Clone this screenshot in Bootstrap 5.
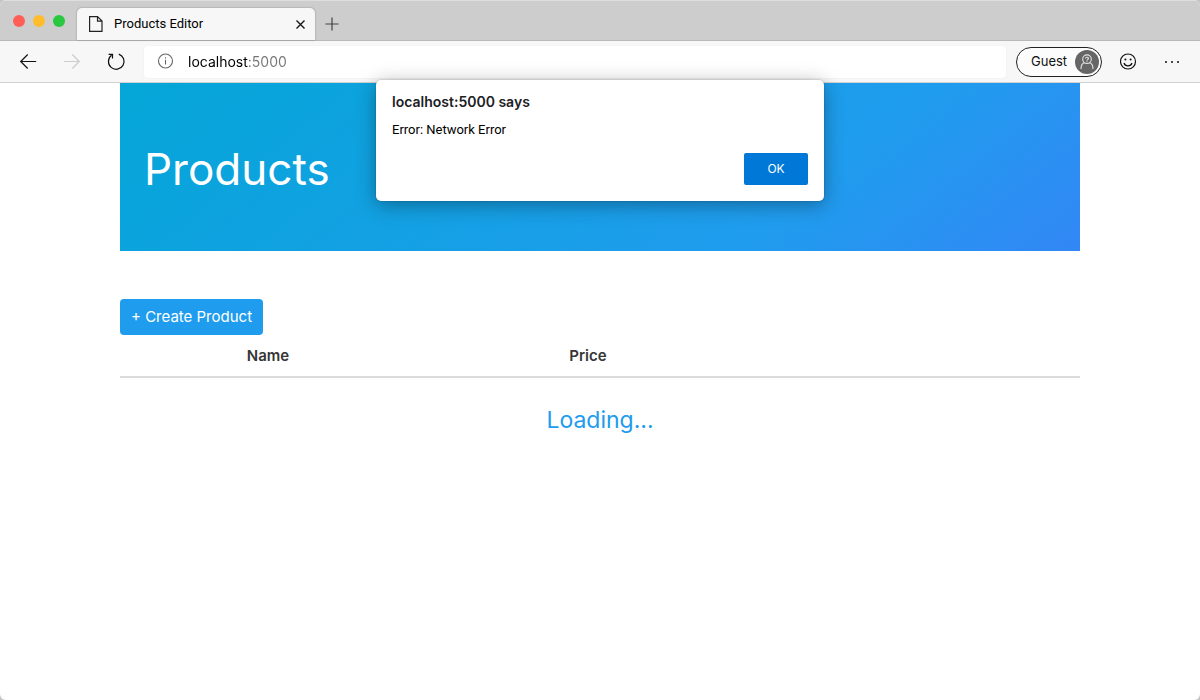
<!DOCTYPE html>
<html lang="en">
<head>
<meta charset="utf-8">
<meta name="viewport" content="width=device-width, initial-scale=1">
<title>Products Editor</title>
<link href="https://cdn.jsdelivr.net/npm/bootstrap@5.3.0/dist/css/bootstrap.min.css" rel="stylesheet">
<style>
  body { font-family: Inter, "Liberation Sans", sans-serif; background: #c4c4c4; color: #363636; }
  .app-window { background: #fff; border-radius: 6px; overflow: hidden; }
  .tab-strip { height: 40px; padding-left: 13px; background: #cdcdcd; border-top: 1px solid #dedede; }
  .lights { gap: 8px; width: 64px; }
  .light { width: 12px; height: 12px; border-radius: 50%; }
  .light-close { background: #ff5f57; }
  .light-min { background: #ffbd2e; }
  .light-max { background: #28c940; }
  .page-tab { width: 238px; height: 32px; padding: 0 8px 0 11px; gap: 10px; background: #f7f7f7; border-radius: 5px 5px 0 0; box-shadow: 0 0 2px rgba(0,0,0,.35); }
  .small-ui { font-family: Roboto, "Liberation Sans", sans-serif; font-size: 13px; color: #000; }
  .tool { border: 0; background: none; padding: 0; line-height: 0; color: #111; }
  .tool:disabled { color: #ccc; }
  .new-tab { margin: 7px 0 0 10px; }
  .toolbar { height: 43px; padding: 0 18px; background: #f7f7f7; border-top: 1px solid #b9b9b9; border-bottom: 1px solid #d2d2d2; }
  .address { height: 32px; background: #fff; border-radius: 4px; padding-left: 13px; gap: 14px; margin: 0 10px 0 18px; box-shadow: 0 0 2px rgba(0,0,0,.06); }
  .address input { border: 0; outline: 0; padding: 0; font-size: 14px; color: transparent; background: linear-gradient(90deg, #000 60px, #757575 60px); -webkit-background-clip: text; background-clip: text; }
  .guest { width: 86px; height: 30px; margin-right: 18px; border: 1px solid #222; border-radius: 15px; background: #fcfcfc; padding: 0 2px 0 14px; font-size: 13px; color: #111; }
  .dialog-box { position: absolute; top: 80px; left: 50%; margin-left: -224px; width: 448px; height: 121px; padding: 12px 16px 16px; border-radius: 5px; background: #fff; z-index: 5; box-shadow: 0 4px 20px rgba(0,0,0,.34), 0 0 2px rgba(0,0,0,.25); }
  .dialog-box h2 { font-size: 14px; line-height: 20px; font-weight: 600; color: #202124; margin-bottom: 8px; }
  .dialog-box p { line-height: 20px; margin: 0; }
  .btn-ok, .btn-ok:hover { width: 64px; height: 32px; padding: 0; border: 0; border-radius: 2px; background: #0078d7; color: #fff; font-size: 12px; }
  .page-body { width: 80%; }
  .hero { height: 168px; padding: 4px 24px 0; background: linear-gradient(141deg, #04a6d7 0%, #209cee 71%, #3287f5 100%); color: #fff; }
  .hero h1 { font-size: 44px; font-weight: 400; margin: 0; }
  .btn-create, .btn-create:hover { height: 36px; padding: 1px 11px 0; border: 0; border-radius: 4px; background: #209cee; color: #fff; font-size: 15px; }
  .products { table-layout: fixed; width: 100%; font-size: 15px; }
  .products th { height: 42px; padding-top: 1px; line-height: 20px; text-align: center; font-weight: 600; border-bottom: 2px solid #dbdbdb; }
  .col-name { width: 296px; }
  .col-price { width: 344px; }
  .loading { color: #209cee; font-size: 23px; line-height: 36px; padding-top: 24px; }
</style>
</head>
<body>
<div class="app-window min-vh-100">
  <header>
    <div class="tab-strip d-flex align-items-center">
      <div class="lights d-flex" aria-hidden="true">
        <span class="light light-close"></span><span class="light light-min"></span><span class="light light-max"></span>
      </div>
      <div class="page-tab d-flex align-items-center align-self-end">
        <svg width="16" height="18" viewBox="0 0 16 18" fill="none" stroke="#222" stroke-width="1.2"><path d="M1.6 1.6H9.5L14 6.1V16.4H1.6ZM9.5 1.6V6.1H14"/></svg>
        <span class="small-ui me-auto">Products Editor</span>
        <button class="tool" type="button" aria-label="Close tab"><svg width="13" height="13" viewBox="0 0 13 13" fill="none" stroke="currentColor" stroke-width="1.3"><path d="M2.5 2.5L10.5 10.5M10.5 2.5L2.5 10.5"/></svg></button>
      </div>
      <button class="tool new-tab" type="button" aria-label="New tab"><svg width="14" height="14" viewBox="0 0 14 14" fill="none" stroke="#444" stroke-width="1.2"><path d="M7 .5V13.5M.5 7H13.5"/></svg></button>
    </div>
    <div class="toolbar d-flex align-items-center">
      <button class="tool" type="button" aria-label="Back"><svg width="20" height="20" viewBox="0 0 20 20" fill="none" stroke="currentColor" stroke-width="1.2"><path d="M18.2 9.5H2.8M9.7 2.5L2.7 9.5L9.7 16.5"/></svg></button>
      <button class="tool ms-4" type="button" aria-label="Forward" disabled><svg width="20" height="20" viewBox="0 0 20 20" fill="none" stroke="currentColor" stroke-width="1.2"><path d="M2 9.5H17.3M10.3 2.5L17.3 9.5L10.3 16.5"/></svg></button>
      <button class="tool ms-4" type="button" aria-label="Reload"><svg width="20" height="20" viewBox="0 0 20 20" fill="none" stroke="currentColor" stroke-width="1.2"><path d="M12.8 2.1A7.8 7.8 0 1 1 5.5 3.3M2.6 2.3H6.5V6.4"/></svg></button>
      <div class="address d-flex align-items-center flex-grow-1">
        <svg width="17" height="17" viewBox="0 0 17 17" fill="none" stroke="#666" stroke-width="1.1"><circle cx="8.5" cy="8" r="7"/><path d="M8.5 6.8V11.5M8.5 4.3V5.6"/></svg>
        <input class="flex-grow-1" type="text" value="localhost:5000" aria-label="Address" spellcheck="false">
      </div>
      <button class="guest d-flex align-items-center justify-content-between" type="button">Guest
        <svg width="24" height="24" viewBox="0 0 24 24" fill="none"><circle cx="12" cy="12" r="12" fill="#666"/><g stroke="#e4e4e4" stroke-width="1.1"><circle cx="12" cy="9.2" r="4.3"/><path d="M6 19C6 15.5 7.7 13.2 9.6 12.8M18 19C18 15.5 16.3 13.2 14.4 12.8"/><path d="M10.6 8.5C10.6 6.8 13.4 6.8 13.4 8.4C13.4 9.5 12 9.4 12 10.6M12 11.3V12.2"/></g></svg>
      </button>
      <button class="tool" type="button" aria-label="Send feedback"><svg width="18" height="18" viewBox="0 0 18 18" fill="none" stroke="currentColor" stroke-width="1.2"><circle cx="8" cy="8.5" r="7.5"/><path d="M4 10C5 13.8 11 13.8 12 10"/><g fill="currentColor" stroke="none"><circle cx="5.4" cy="6.5" r="1"/><circle cx="10.6" cy="6.5" r="1"/></g></svg></button>
      <button class="tool ms-4" type="button" aria-label="Menu"><svg width="20" height="18" viewBox="0 0 20 18" fill="currentColor"><circle cx="4" cy="9" r="1"/><circle cx="10" cy="9" r="1"/><circle cx="16" cy="9" r="1"/></svg></button>
    </div>
  </header>

  <div class="dialog-box d-flex flex-column" role="alertdialog" aria-labelledby="dialog-title" aria-describedby="dialog-text">
    <h2 id="dialog-title">localhost:5000 says</h2>
    <p class="small-ui" id="dialog-text">Error: Network Error</p>
    <button class="btn btn-ok align-self-end mt-auto" type="button">OK</button>
  </div>

  <main class="page-body mx-auto">
    <section class="hero d-flex align-items-center"><h1>Products</h1></section>
    <button class="btn btn-create mt-5" type="button">+ Create Product</button>
    <table class="products">
      <colgroup><col class="col-name"><col class="col-price"><col></colgroup>
      <thead><tr><th scope="col">Name</th><th scope="col">Price</th><th></th></tr></thead>
    </table>
    <p class="loading text-center mb-0">Loading...</p>
  </main>
</div>
<script src="https://cdn.jsdelivr.net/npm/bootstrap@5.3.0/dist/js/bootstrap.bundle.min.js"></script>
</body>
</html>
